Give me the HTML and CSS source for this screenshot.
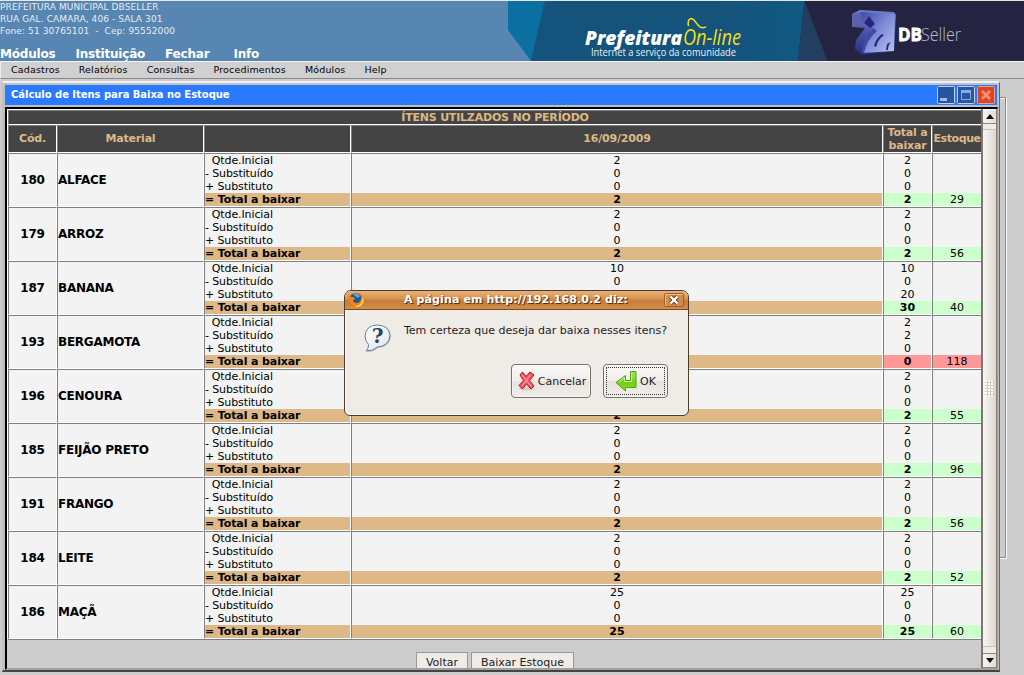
FILE: index.html
```html
<!DOCTYPE html>
<html lang="pt-BR">
<head>
<meta charset="utf-8">
<title>Prefeitura On-line</title>
<link rel="stylesheet" href="styles.css">
</head>
<body>
<header class="banner">
  <div class="banner-info">
    <p>PREFEITURA MUNICIPAL DBSELLER</p>
    <p>RUA GAL. CAMARA, 406 - SALA 301</p>
    <p>Fone: 51 30765101 &nbsp;-&nbsp; Cep: 95552000</p>
    <nav class="main-nav"><a>Módulos</a><a>Instituição</a><a>Fechar</a><a class="info">Info</a></nav>
  </div>
  <svg class="banner-art" width="516" height="60" viewBox="508 1 516 60">
    <defs>
      <linearGradient id="sea" x1="0" x2="1"><stop offset="0" stop-color="#14537c"/><stop offset=".7" stop-color="#14537c"/><stop offset="1" stop-color="#105983"/></linearGradient>
      <linearGradient id="cube" x1="0" x2="1" y2="1"><stop offset="0" stop-color="#3e49a6"/><stop offset=".5" stop-color="#7f8cd8"/><stop offset="1" stop-color="#b9c4f6"/></linearGradient>
      <linearGradient id="side" x1="0" y1="0" x2="0" y2="1"><stop offset="0" stop-color="#747dc6"/><stop offset="1" stop-color="#252c82"/></linearGradient>
    </defs>
    <path d="M508 1H544V61H531L508 30Z" fill="#0b6fa2"/>
    <path d="M544.500 1H805V61H531Z" fill="url(#sea)"/>
    <path d="M804.500 1H1024V61H798Z" fill="#242342"/>
    <path d="M804.500 1L827.500 61H798Z" fill="#223e60"/>
    <text x="585" y="44.500" class="logo-bold" textLength="97" lengthAdjust="spacingAndGlyphs">Prefeitura</text>
    <text x="683" y="44.500" class="logo-light" textLength="58" lengthAdjust="spacingAndGlyphs">On-line</text>
    <path d="M688.500 26C687 19 691 17 694 20S699 30 706 27" fill="none" stroke="#f5dc16" stroke-width="1.600"/>
    <text x="591" y="55.500" class="logo-tag" textLength="145" lengthAdjust="spacingAndGlyphs">Internet a serviço da comunidade</text>
    <path d="M852 14L860 10L894 12L896 15L894 51L862 55L855 49L856 40L865 28L852 27Z" fill="url(#side)"/>
    <path d="M861 12L895 14L894 51L862 53Q865 37 873 27L862 26Z" fill="url(#cube)"/>
    <path d="M852 15L861 12L862 26L853 27Z" fill="#5961ad"/>
    <path d="M869 16L875 24L870 28L864 23Z" fill="#29237d"/>
    <path d="M862 53Q863 38 873 28L877 31Q867 39 864 53Z" fill="#414aa7"/>
    <path d="M874 46Q876 38 882 34L884 35Q878 39 876 47ZM886 50L887 44L891 42Q888 45 888 50Z" fill="#252c68"/>
    <text x="898" y="41" class="seller-bold" textLength="24" lengthAdjust="spacingAndGlyphs">DB</text>
    <text x="921" y="41" class="seller-light" textLength="40" lengthAdjust="spacingAndGlyphs">Seller</text>
  </svg>
</header>
<nav class="menu"><a>Cadastros</a><a>Relatórios</a><a>Consultas</a><a>Procedimentos</a><a>Módulos</a><a>Help</a></nav>

<main class="desktop">
  <div class="back-frame"></div>
  <section class="window">
    <div class="titlebar">
      <h1>Cálculo de Itens para Baixa no Estoque</h1>
      <div class="controls">
        <svg class="ctl" width="18" height="18"><rect x=".5" y=".5" width="17" height="17" rx="1" fill="#2854a4" stroke="#c3d0e4"/><rect x="3" y="12" width="7" height="3" fill="#9dbdf0"/></svg>
        <svg class="ctl" width="18" height="18"><rect x=".5" y=".5" width="17" height="17" rx="1" fill="#2854a4" stroke="#c3d0e4"/><path d="M4.500 5V13.500H13.500V5" fill="none" stroke="#83abe8"/><rect x="4" y="4" width="10" height="3" fill="#83abe8"/></svg>
        <svg class="ctl" width="18" height="18"><rect x=".5" y=".5" width="17" height="17" rx="1" fill="#dc4426" stroke="#dea294"/><path d="M5 5L13 13M13 5L5 13" stroke="#ff8e6d" stroke-width="2.800"/></svg>
      </div>
    </div>
    <div class="viewport">
      <div class="content">
        <table class="items">
          <colgroup><col class="c-code"><col class="c-name"><col class="c-label"><col class="c-day"><col class="c-total"><col class="c-stock"></colgroup>
          <thead>
            <tr class="caption-row"><th colspan="6">ÍTENS UTILZADOS NO PERÍODO</th></tr>
            <tr class="head-row"><th>Cód.</th><th>Material</th><th></th><th>16/09/2009</th><th>Total a baixar</th><th class="stock-head">Estoque</th></tr>
          </thead>
          <tbody id="rows"></tbody>
        </table>
        <div class="actions"><button>Voltar</button><button>Baixar Estoque</button></div>
      </div>
      <div class="scrollbar">
        <div class="arrow"><svg width="8" height="5"><path d="M0 5L4 0L8 5Z" fill="#111"/></svg></div>
        <div class="thumb"><i class="grip"></i></div>
        <div class="arrow down"><svg width="8" height="5"><path d="M0 0H8L4 5Z" fill="#111"/></svg></div>
      </div>
    </div>
  </section>
</main>

<div class="dialog">
  <div class="dialog-title">
    <svg class="fox" width="16" height="16" viewBox="0 0 16 16"><circle cx="8" cy="8" r="7.300" fill="#e66a0e"/><circle cx="7.500" cy="7" r="5.800" fill="#1c56a5"/><path d="M5 2Q9 0 12 4L10 6L7 4Z" fill="#56aee0"/><path d="M1 3L3 5L6 5L7 7L5 8Q5 11 9 11Q12 11 13 7L14 3Q17 9 13 13Q8 17 3 13Q0 9 1 3Z" fill="#ef8715"/><path d="M14 5Q15 10 11 13Q8 15 5 14Q13 17 15.500 10Q16 7 14 5Z" fill="#ffe04a"/></svg>
    <span>A página em http://192.168.0.2 diz:</span>
    <svg class="dialog-close" width="20" height="14"><rect x=".5" y=".5" width="19" height="13" rx="1" fill="#d28c4b" stroke="#9b5d2a"/><path d="M1.500 12.500V1.500H18.500" fill="none" stroke="#efbf8d"/><path d="M6.500 3.500L13.500 10.500M13.500 3.500L6.500 10.500" stroke="#6b3b15" stroke-width="4.200"/><path d="M6.500 3.500L13.500 10.500M13.500 3.500L6.500 10.500" stroke="#fff" stroke-width="2.400"/></svg>
  </div>
  <div class="dialog-message">
    <svg class="bubble" width="28" height="30" viewBox="0 0 28 30"><defs><linearGradient id="bub" x1="0" y1="0" x2="1" y2="1"><stop offset="0" stop-color="#fff"/><stop offset="1" stop-color="#dfe5ea"/></linearGradient></defs><path d="M3 28Q6 25 5 21Q1 18 1.500 12Q2 2 14 1.500Q26 2 27 12Q26 23 14 24Q10 28 3 28Z" fill="#bdbcb8"/><path d="M2 27Q5 24 4.500 20.500Q1 17 1 12Q2 1 13.500 1Q25 1.500 26 11.500Q25 22 13.500 23Q9 27 2 27Z" fill="url(#bub)" stroke="#66809a"/><text x="13.500" y="19" class="question">?</text></svg>
    <p>Tem certeza que deseja dar baixa nesses itens?</p>
  </div>
  <div class="dialog-buttons">
    <button class="dlg-btn cancel"><svg width="18" height="20" viewBox="0 0 18 20"><ellipse cx="9" cy="17.500" rx="8" ry="2" fill="#d2cfcb"/><path d="M2 4L4.500 1L8 5.500L12 1L16 4L11.500 9.500L16 15L13 18L8.500 13L4.500 18L1 14.500L5.500 9.500Z" fill="#ee5560" stroke="#c2121d"/><path d="M4 4L13.500 15.500M12.500 4L4 15" stroke="#ff9095" stroke-width="1.300"/></svg><span>Cancelar</span></button>
    <button class="dlg-btn ok"><svg width="22" height="22" viewBox="0 0 22 22"><defs><linearGradient id="grn" x1="0" y1="0" x2="0" y2="1"><stop offset="0" stop-color="#a9e550"/><stop offset=".6" stop-color="#71cf15"/><stop offset="1" stop-color="#8be42c"/></linearGradient></defs><path d="M15.500 1.500H21V17.500H10.500V21L1 12.500L10.500 5.500V10.500H15.500Z" fill="url(#grn)" stroke="#49a31a"/><path d="M16.500 2.500V11.500H9.500V7.500L3 12.500" fill="none" stroke="#c6f48b"/></svg><span>OK</span></button>
  </div>
</div>
<script src="app.js"></script>
</body>
</html>
```
FILE: styles.css
```css
* { box-sizing: border-box; }
body { margin: 0; width: 1024px; height: 675px; overflow: hidden; background: #ccc; font-family: "DejaVu Sans", sans-serif; font-size: 11px; color: #000; }
p, h1 { margin: 0; font-weight: normal; }
button { font-family: inherit; }

.banner { display: flex; justify-content: space-between; height: 62px; background: #5786b2; border-top: 1px solid #e8e8e4; border-bottom: 1px solid #f4f4f2; }
.banner-info { color: #e6edf5; font-size: 9px; line-height: 12px; letter-spacing: .1px; white-space: nowrap; }
.main-nav { display: flex; gap: 20px; margin-top: 10px; font-size: 12px; line-height: 14px; font-weight: bold; letter-spacing: -.2px; color: #fff; }
.main-nav .info { margin-left: 4px; }
.banner-art { display: block; }
.logo-bold { font: italic 800 20px "Open Sans", sans-serif; fill: #fff; }
.logo-light { font: italic 21px "Open Sans", sans-serif; fill: #f5dc16; }
.logo-tag { font: 10px "Open Sans", sans-serif; fill: #e8f0f5; }
.seller-bold { font: bold 18px "Open Sans", sans-serif; fill: #fff; stroke: #fff; stroke-width: .8px; }
.seller-light { font: 300 18px "Open Sans", sans-serif; fill: #bcbdca; }

.menu { display: flex; gap: 19px; height: 17px; padding-left: 10px; background: #d0d0d0; border-bottom: 1px solid #888; border-left: 1px solid #eee; font-size: 9.500px; line-height: 16px; letter-spacing: .15px; }

.desktop { position: relative; height: 596px; }
.back-frame { position: absolute; left: 990px; top: 18px; width: 16px; height: 461px; border: 1px solid #888; box-shadow: 1px 1px #fff, inset 0 1px #f4f4f4; }
.window { position: absolute; left: 2px; top: 2px; width: 998px; height: 591px; display: flex; flex-direction: column; padding: 2px 1px 0; background: #c0c0c0; border: solid; border-width: 2px 1px 2px; border-color: #f0f0f0 #666 #444 #c0c0c0; }
.titlebar { display: flex; justify-content: space-between; height: 20px; margin: 0 1px; padding-left: 6px; background: #2a7aff; }
.titlebar h1 { font-size: 10px; font-weight: bold; line-height: 19px; letter-spacing: -.04px; color: #fff; }
.controls { display: flex; gap: 2px; padding-top: 1px; margin-right: 2px; }
.viewport { display: flex; flex: 1; min-height: 0; margin-top: 2px; margin-left: 1px; border: solid; border-width: 2px 1px 2px 2px; border-color: #000 #999 #a0a0a0 #000; background: #ccc; }
.content { flex: 1; min-width: 0; padding: 1px 0 0 1px; overflow: hidden; }

.items { width: 975px; table-layout: fixed; border-collapse: separate; border-spacing: 0; border-right: 1px solid #808080; border-bottom: 1px solid #808080; font-size: 11px; box-shadow: -1px -1px #fff; }
.c-code { width: 49px; } .c-name { width: 147px; } .c-label { width: 147px; } .c-day { width: 532px; } .c-total { width: 49px; } .c-stock { width: 50px; }
.items th, .items td { padding: 0; border: 1px solid; border-color: #808080 #fff #fff #808080; }
.items th { background: #444; color: #deb887; font-weight: bold; line-height: 13px; letter-spacing: -.2px; }
.items th.stock-head { letter-spacing: -.4px; }
.caption-row th { height: 15px; }
.head-row th { height: 28px; }
.head-row th:not(:nth-child(5)) { padding-bottom: 2px; }
.items td { height: 54px; background: #f3f3f3; line-height: 13px; white-space: pre; vertical-align: top; }
.items td.code, .items td.name { vertical-align: middle; font-size: 12px; font-weight: bold; letter-spacing: -.25px; }
.labels { letter-spacing: -.11px; }
.code, .num { text-align: center; }
.items td div { height: 13px; }
.sum { background: #deb887; font-weight: bold; }
.ok-cell { background: #cfc; }
.low-cell { background: #f99; }
.bold { font-weight: bold; }

.actions { display: flex; justify-content: center; gap: 3px; padding: 12px 0 0 1px; }
.actions button { height: 20px; padding: 0 9px; font-size: 11px; color: #222; background: #efebe7; border: 1px solid #999; }

.scrollbar { display: flex; flex-direction: column; flex: none; width: 16px; border-left: 2px solid #7c7770; border-right: 1px solid #8d8377; background: #efebe7; }
.arrow { display: flex; align-items: center; justify-content: center; height: 15px; background: linear-gradient(90deg, #f8f6f4, #e2ddd7); border-top: 1px solid #faf8f6; border-bottom: 1px solid #8d8377; }
.arrow.down { border-top-color: #8d8377; }
.thumb { flex: 1; display: flex; align-items: center; justify-content: center; margin: 5px 0 6px; background: linear-gradient(90deg, #f8f6f4, #dcd6cf); border-top: 1px solid #c8c1b9; border-bottom: 1px solid #c8c1b9; }
.grip { width: 9px; height: 17px; background: radial-gradient(circle at 1px 1px, #fff 1px, transparent 1.200px) 0 0 / 3px 3px, #d2ccc5; }

.dialog { position: absolute; left: 344px; top: 290px; width: 345px; height: 126px; background: #efebe7; border: 1px solid #4b3b2d; border-radius: 7px 7px 6px 6px; overflow: hidden; box-shadow: inset 1px -1px #fff; }
.dialog-title { display: flex; align-items: center; justify-content: space-between; height: 19px; padding: 0 4px 0 3px; background: linear-gradient(#e9b279, #d88f4b 45%, #c47e3b 55%, #d28d4c); border-bottom: 1px solid #7b4a22; color: #fff; font-size: 11px; font-weight: bold; letter-spacing: .12px; text-shadow: 1px 1px 1px #3b2411; }
.dialog-title span { padding-left: 4px; line-height: 16px; padding-bottom: 1px; }
.dialog-message { display: flex; gap: 12px; padding: 13px 0 0 19px; height: 54px; font-size: 11px; color: #1d1d1d; }
.dialog-message p { line-height: 15px; }
.bubble { margin-top: 1px; }
.question { font: bold 20px "DejaVu Serif", serif; fill: #26465a; text-anchor: middle; }
.dialog-buttons { display: flex; justify-content: flex-end; gap: 12px; padding-right: 20px; }
.dlg-btn { display: flex; align-items: center; justify-content: center; height: 34px; padding: 0; font-size: 11px; color: #1d1d1d; background: linear-gradient(#faf9f8, #f0edea 49%, #e7e3de 51%, #f0edea); border: 1px solid #7b7067; border-radius: 4px; box-shadow: inset 0 0 0 1px #fff8; }
.cancel { width: 80px; gap: 2px; padding-left: 2px; }
.ok { position: relative; width: 65px; gap: 3px; }
.ok::after { content: ""; position: absolute; inset: 2px; border: 1px dotted #333; }
```
FILE: app.js
```js
const items = [
  [180, "ALFACE", [2, 0, 0, 2], [2, 0, 0, 2], 29],
  [179, "ARROZ", [2, 0, 0, 2], [2, 0, 0, 2], 56],
  [187, "BANANA", [10, 0, 20, 30], [10, 0, 20, 30], 40],
  [193, "BERGAMOTA", [2, 2, 0, 0], [2, 2, 0, 0], 118],
  [196, "CENOURA", [2, 0, 0, 2], [2, 0, 0, 2], 55],
  [185, "FEIJÃO PRETO", [2, 0, 0, 2], [2, 0, 0, 2], 96],
  [191, "FRANGO", [2, 0, 0, 2], [2, 0, 0, 2], 56],
  [184, "LEITE", [2, 0, 0, 2], [2, 0, 0, 2], 52],
  [186, "MAÇÃ", [25, 0, 0, 25], [25, 0, 0, 25], 60]
];
const labels = ["\u00a0 Qtde.Inicial", "- Substituído", "+ Substituto", "= Total a baixar"];
const lines = (values, last) => values.map((v, i) => `<div class="${i === 3 ? last : ""}">${v}</div>`).join("");
document.getElementById("rows").innerHTML = items.map(([code, name, day, total, stock]) => {
  const state = total[3] > 0 ? "ok-cell" : "low-cell";
  return `<tr><td class="code">${code}</td><td class="name">${name}</td>` +
    `<td class="labels">${lines(labels, "sum")}</td><td class="num">${lines(day, "sum")}</td>` +
    `<td class="num">${lines(total, state + " bold")}</td><td class="num">${lines(["", "", "", stock], state)}</td></tr>`;
}).join("");
```
